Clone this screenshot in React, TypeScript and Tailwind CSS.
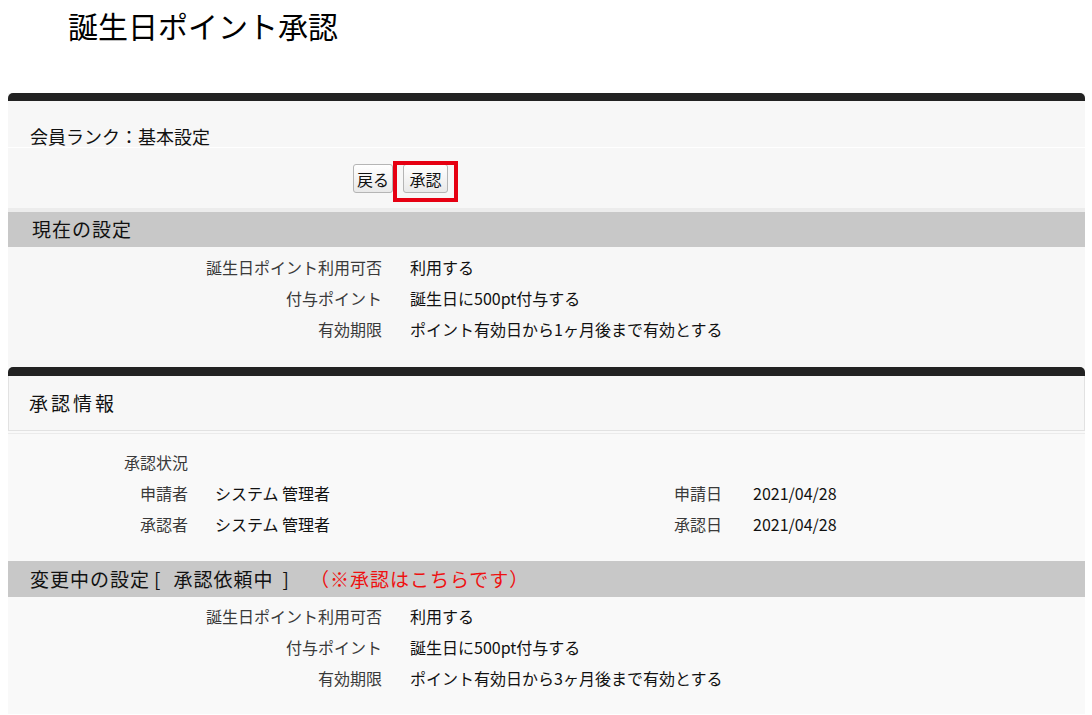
import React from 'react'

const font = { fontFamily: '"Noto Sans CJK JP", "Noto Sans", sans-serif' }

type Row = { label: string; value: string }

const current: Row[] = [
  { label: '誕生日ポイント利用可否', value: '利用する' },
  { label: '付与ポイント', value: '誕生日に500pt付与する' },
  { label: '有効期限', value: 'ポイント有効日から1ヶ月後まで有効とする' }
]

const pending: Row[] = [
  { label: '誕生日ポイント利用可否', value: '利用する' },
  { label: '付与ポイント', value: '誕生日に500pt付与する' },
  { label: '有効期限', value: 'ポイント有効日から3ヶ月後まで有効とする' }
]

function SettingRows({ rows }: { rows: Row[] }) {
  return (
    <div className="flex flex-col">
      {rows.map((r) => (
        <div key={r.label} className="flex h-[31px] items-center text-[16px]">
          <div className="w-[374px] text-right text-[#3a3a3a]">{r.label}</div>
          <div className="ml-[28px] text-[#111]">{r.value}</div>
        </div>
      ))}
    </div>
  )
}

function Btn({ children, w }: { children: React.ReactNode; w: string }) {
  return (
    <button
      className={`${w} h-[29px] rounded-[3px] border border-[#b5b5b5] bg-gradient-to-b from-white to-[#e9e9e9] text-[16px] leading-none text-[#111]`}
    >
      {children}
    </button>
  )
}

export default function App() {
  return (
    <div className="min-h-[715px] bg-white" style={font}>
      {/* Page title */}
      <div className="h-[93px] pl-[68px] pt-[6px]">
        <h1 className="text-[30px] leading-[38px] text-black">誕生日ポイント承認</h1>
      </div>

      {/* Panel 1 */}
      <div className="ml-[8px] mr-[7px] bg-[#f7f7f7]">
        <div className="h-[8px] rounded-t-[5px] bg-[#222]" />
        <div className="h-[47px] border-b border-white pl-[22px] pt-[24px] text-[18px] leading-[22px] text-[#111]">
          会員ランク：基本設定
        </div>
        <div className="flex h-[60px] gap-[10px] pl-[345px] pt-[16px]">
          <Btn w="w-[40px]">戻る</Btn>
          <div className="relative">
            <Btn w="w-[45px]">承認</Btn>
            <div className="pointer-events-none absolute left-[-10px] top-[-3px] h-[41px] w-[65px] border-[4px] border-[#e60012]" />
          </div>
        </div>
        <div className="h-[4px] bg-[#ececec]" />
        <div className="flex h-[35px] items-center bg-[#c8c8c8] pl-[24px] text-[19px] tracking-[1px] text-[#111]">
          現在の設定
        </div>
        <div className="pt-[4px] pb-[23px]">
          <SettingRows rows={current} />
        </div>
      </div>

      {/* Panel 2 */}
      <div className="ml-[8px] mr-[7px] bg-[#f9f9f9]">
        <div className="h-[9px] rounded-t-[5px] bg-[#222]" />
        <div className="flex h-[55px] items-center border-x border-b border-[#e2e2e2] bg-[#f7f7f7] pl-[20px] text-[19px] tracking-[3px] text-[#111]">
          承認情報
        </div>
        <div className="mt-[2px] border-t border-[#ebebeb] pt-[12px] pb-[22px] text-[16px]">
          <div className="flex h-[31px] items-center">
            <div className="w-[180px] text-right text-[#3a3a3a]">承認状況</div>
          </div>
          {[
            ['申請者', 'システム 管理者', '申請日', '2021/04/28'],
            ['承認者', 'システム 管理者', '承認日', '2021/04/28']
          ].map(([l1, v1, l2, v2]) => (
            <div key={l1} className="flex h-[31px] items-center">
              <div className="w-[180px] text-right text-[#3a3a3a]">{l1}</div>
              <div className="ml-[27px] w-[407px] text-[#111]">{v1}</div>
              <div className="w-[100px] text-right text-[#3a3a3a]">{l2}</div>
              <div className="ml-[31px] text-[#111]">{v2}</div>
            </div>
          ))}
        </div>
        <div className="flex h-[36px] items-center bg-[#c8c8c8] pl-[22px] text-[19px] tracking-[1px] text-[#111]">
          <span>変更中の設定</span>
          <span className="ml-[4px]">[</span>
          <span className="ml-[12px]">承認依頼中</span>
          <span className="ml-[9px]">]</span>
          <span className="ml-[20px] text-[#ee1111]">（※承認はこちらです）</span>
        </div>
        <div className="pt-[3px] pb-[21px]">
          <SettingRows rows={pending} />
        </div>
      </div>
    </div>
  )
}
